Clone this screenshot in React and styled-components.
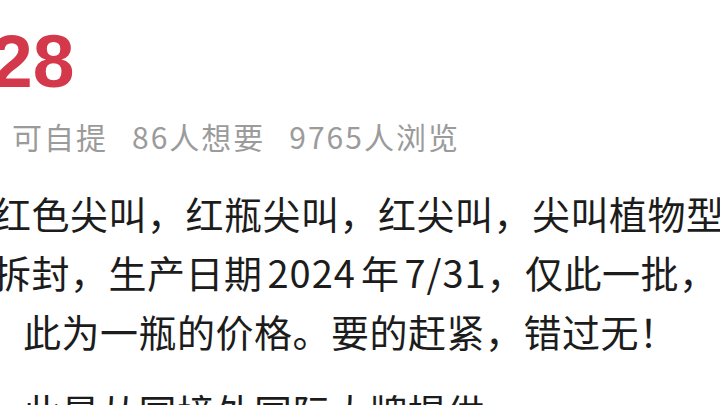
import React from 'react';
import styled, { createGlobalStyle } from 'styled-components';

const Global = createGlobalStyle`
  html, body { margin: 0; padding: 0; background: #ffffff; }
  body { width: 720px; height: 405px; overflow: hidden; }
`;

const Page = styled.main`
  width: 720px;
  height: 405px;
  box-sizing: border-box;
  overflow: hidden;
  background: #ffffff;
  display: flex;
  flex-direction: column;
  padding-top: 23px;
  font-family: "Noto Sans CJK SC", "Noto Sans", sans-serif;
`;

const Price = styled.div`
  font-family: "Liberation Sans", Arial, sans-serif;
  font-weight: 700;
  font-size: 75px;
  line-height: 76px;
  color: #d3394a;
  white-space: nowrap;
  text-indent: -9px;
`;

const Stats = styled.div`
  display: flex;
  gap: 24px;
  margin-top: 22px;
  padding-left: 12px;
  font-size: 30px;
  line-height: 30px;
  letter-spacing: 2px;
  color: #9b9b9b;
  white-space: nowrap;
`;

const Stat = styled.span``;

const Desc = styled.div`
  margin-top: 32px;
  display: flex;
  flex-direction: column;
  gap: 21px;
`;

const Paragraph = styled.div`
  display: flex;
  flex-direction: column;
`;

const Line = styled.p`
  margin: 0;
  font-size: 38px;
  line-height: 59px;
  letter-spacing: 0.5px;
  color: #1c1c1c;
  white-space: nowrap;
  text-indent: ${(p) => p.$indent}px;
`;

const Latin = styled.span`
  margin: 0 ${(p) => (p.$tight ? 0 : 5)}px 0 5px;
  letter-spacing: 1px;
`;

export default function App() {
  return (
    <>
      <Global />
      <Page>
        <Price>28</Price>
        <Stats>
          <Stat>可自提</Stat>
          <Stat>86人想要</Stat>
          <Stat>9765人浏览</Stat>
        </Stats>
        <Desc>
          <Paragraph>
            <Line $indent={-7}>红色尖叫，红瓶尖叫，红尖叫，尖叫植物型</Line>
            <Line $indent={-7}>
              拆封，生产日期<Latin>2024</Latin>年<Latin $tight>7/31</Latin>，仅此一批，
            </Line>
            <Line $indent={23}>此为一瓶的价格。要的赶紧，错过无！</Line>
          </Paragraph>
          <Paragraph>
            <Line $indent={23}>此是从国境外国际大牌提供</Line>
          </Paragraph>
        </Desc>
      </Page>
    </>
  );
}
